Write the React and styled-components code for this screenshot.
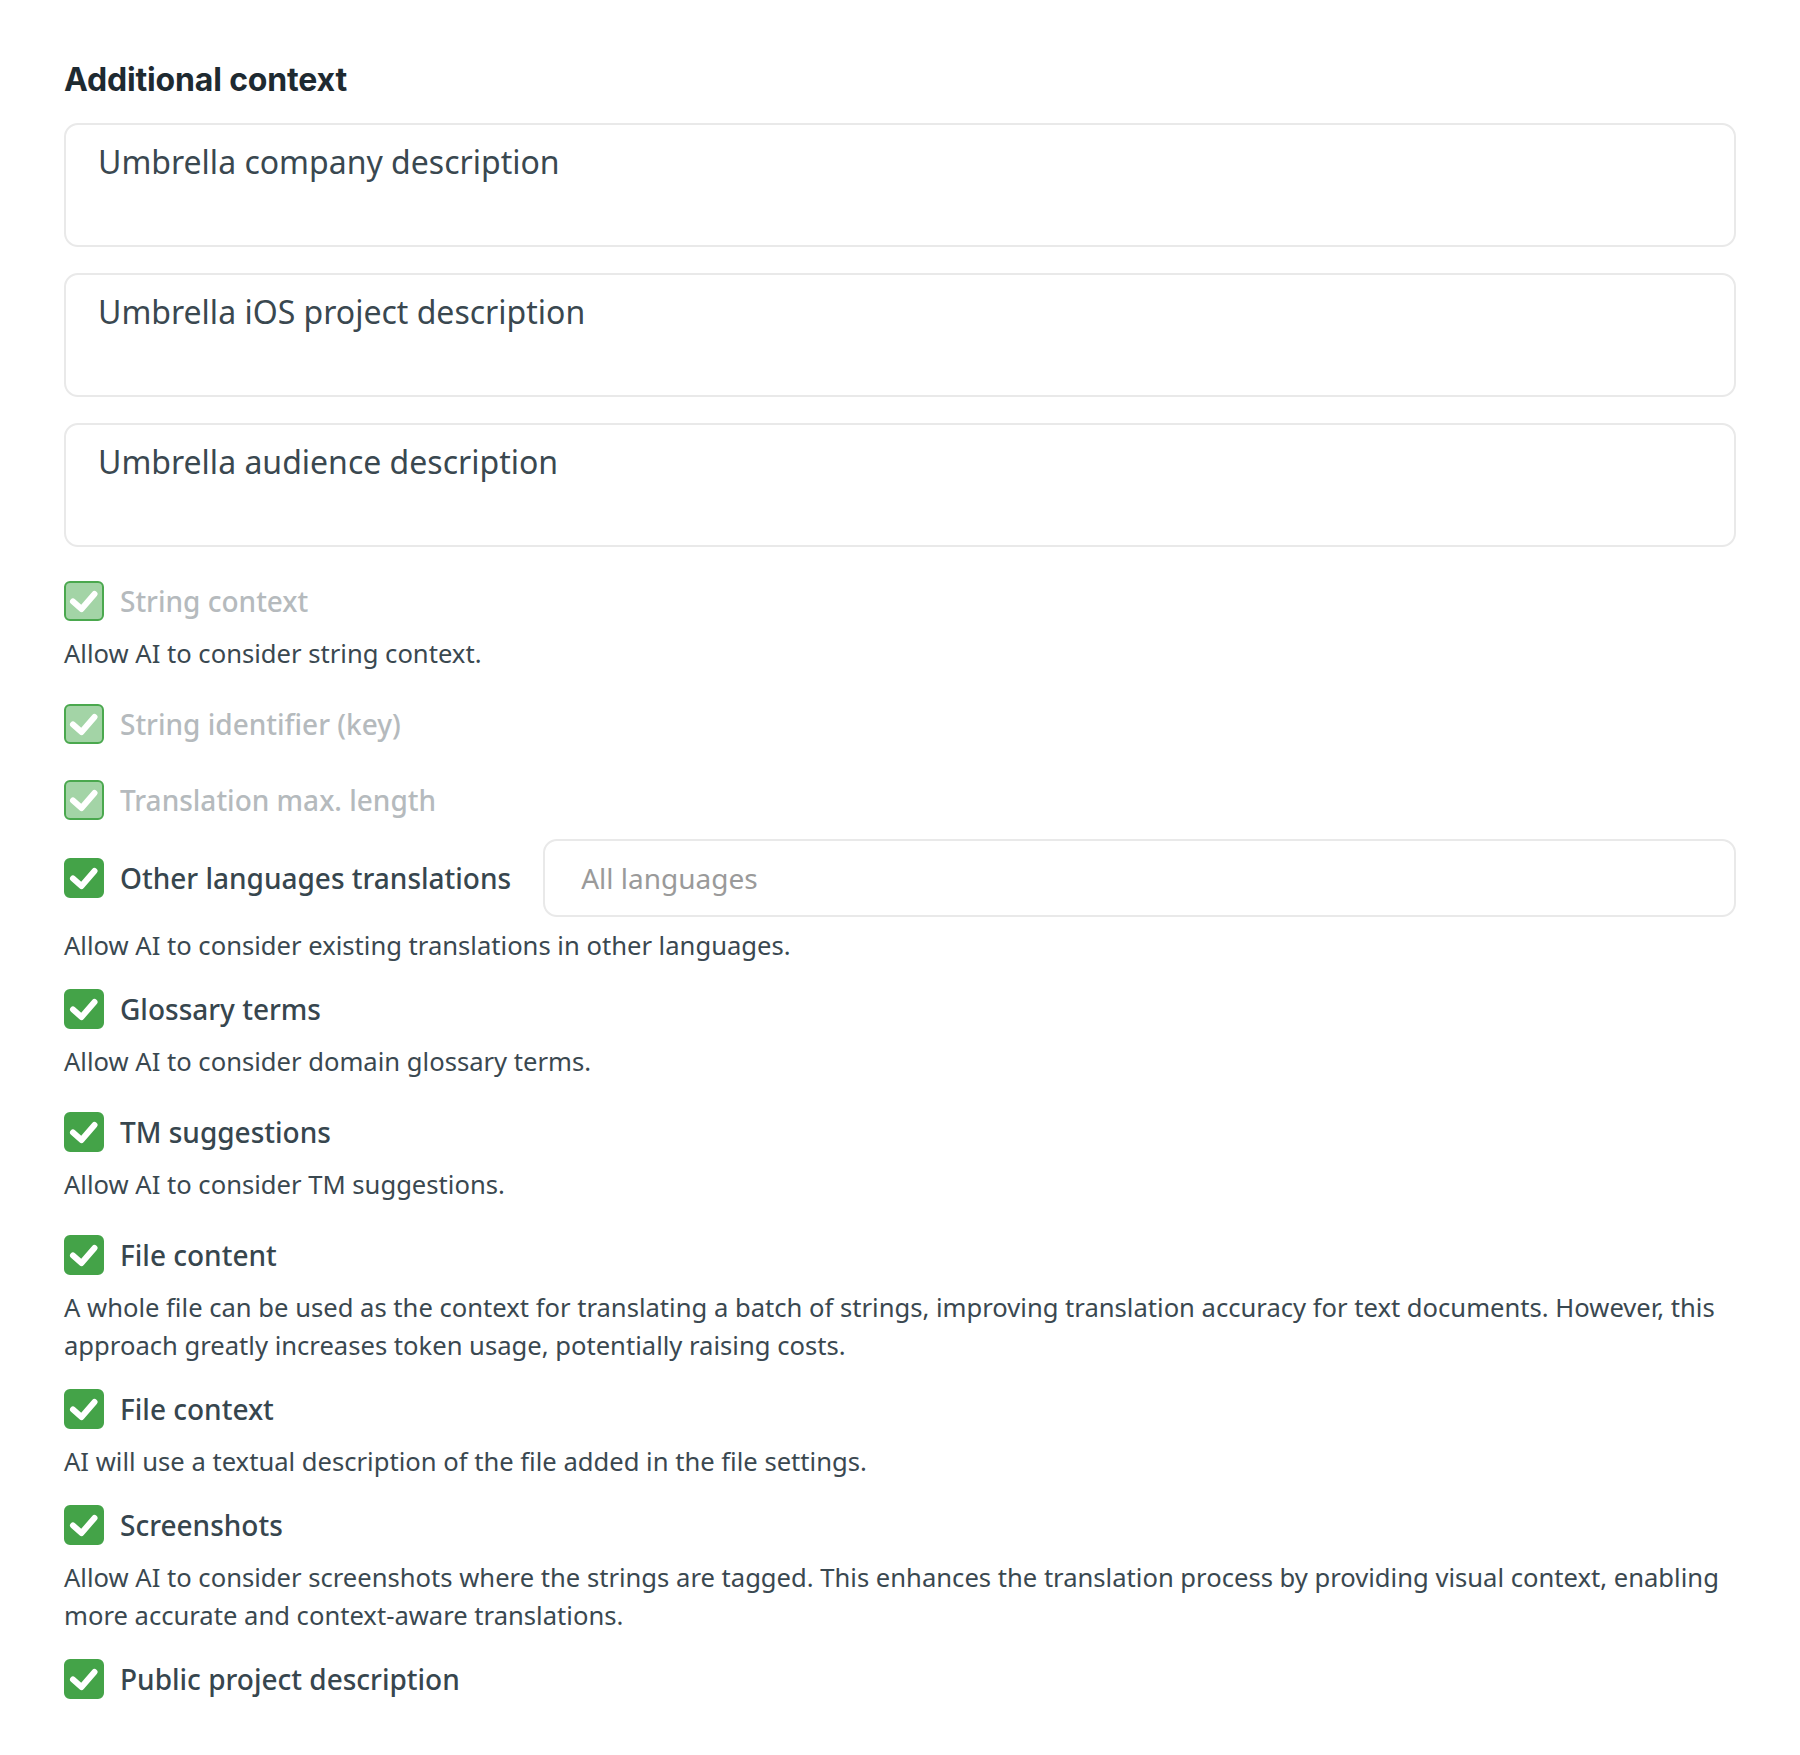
import React from 'react';
import styled, { createGlobalStyle } from 'styled-components';

const GlobalStyle = createGlobalStyle`
  html, body { margin: 0; padding: 0; background: #ffffff; }
  body { font-family: "Noto Sans", "Open Sans", sans-serif; }
  *, *::before, *::after { box-sizing: border-box; }
`;

const Page = styled.main`
  display: flex;
  flex-direction: column;
  padding: 60px 64px 54px;
`;

const Heading = styled.h2`
  margin: 0 0 23px;
  font-family: Inter, "Liberation Sans", sans-serif;
  font-weight: 700;
  font-size: 32px;
  line-height: 40px;
  letter-spacing: -0.005em;
  color: #1e2a31;
`;

const AreaList = styled.div`
  display: flex;
  flex-direction: column;
  gap: 26px;
`;

const ContextArea = styled.textarea`
  display: block;
  width: 100%;
  height: 124px;
  resize: none;
  margin: 0;
  border: 2px solid #e9e9e9;
  border-radius: 14px;
  padding: 13px 32px;
  font-family: "Noto Sans", sans-serif;
  font-size: 32px;
  line-height: 48px;
  color: #3a4850;
  background: #ffffff;
  outline: none;
`;

const Option = styled.section`
  display: flex;
  flex-direction: column;
  margin-top: ${(p) => p.$gap}px;
`;

const Row = styled.label`
  display: flex;
  align-items: center;
  min-height: 48px;
  gap: 16px;
`;

const Box = styled.span`
  flex: none;
  width: 40px;
  height: 40px;
  border-radius: 6px;
  display: flex;
  align-items: center;
  justify-content: center;
  background: ${(p) => (p.$disabled ? '#a3d4a6' : '#44a348')};
  border: 2px solid ${(p) => (p.$disabled ? '#4aa84e' : '#44a348')};
`;

const Label = styled.span`
  font-size: 28px;
  font-weight: 500;
  line-height: 40px;
  color: ${(p) => (p.$disabled ? '#b5babd' : '#37464e')};
`;

const LangInput = styled.input`
  flex: 1;
  min-width: 0;
  height: 78px;
  margin: 0 0 0 16px;
  border: 2px solid #e9e9e9;
  border-radius: 14px;
  padding: 0 36px;
  font-family: "Noto Sans", sans-serif;
  font-size: 28px;
  color: #3a4850;
  background: #ffffff;
  outline: none;
  &::placeholder { color: #9a9a9a; opacity: 1; }
`;

const Description = styled.p`
  margin: 10px 0 0;
  font-size: 25.6px;
  line-height: 38px;
  color: #3a4850;
`;

const Check = () => (
  <svg width="36" height="36" viewBox="0 0 36 36" aria-hidden="true">
    <polyline
      points="7,18.5 15.5,26 28.5,11"
      fill="none"
      stroke="#ffffff"
      strokeWidth="6"
      strokeLinecap="round"
      strokeLinejoin="round"
    />
  </svg>
);

const options = [
  { label: 'String context', disabled: true, gap: 30, desc: 'Allow AI to consider string context.' },
  { label: 'String identifier (key)', disabled: true, gap: 27 },
  { label: 'Translation max. length', disabled: true, gap: 28 },
  { label: 'Other languages translations', gap: 15, input: true, desc: 'Allow AI to consider existing translations in other languages.' },
  { label: 'Glossary terms', gap: 20, desc: 'Allow AI to consider domain glossary terms.' },
  { label: 'TM suggestions', gap: 27, desc: 'Allow AI to consider TM suggestions.' },
  {
    label: 'File content',
    gap: 27,
    desc: 'A whole file can be used as the context for translating a batch of strings, improving translation accuracy for text documents. However, this approach greatly increases token usage, potentially raising costs.',
  },
  { label: 'File context', gap: 20, desc: 'AI will use a textual description of the file added in the file settings.' },
  {
    label: 'Screenshots',
    gap: 20,
    desc: 'Allow AI to consider screenshots where the strings are tagged. This enhances the translation process by providing visual context, enabling more accurate and context-aware translations.',
  },
  { label: 'Public project description', gap: 20 },
];

export default function App() {
  return (
    <>
      <GlobalStyle />
      <Page>
        <Heading>Additional context</Heading>
        <AreaList>
          <ContextArea readOnly defaultValue="Umbrella company description" />
          <ContextArea readOnly defaultValue="Umbrella iOS project description" />
          <ContextArea readOnly defaultValue="Umbrella audience description" />
        </AreaList>
        {options.map((o) => (
          <Option key={o.label} $gap={o.gap}>
            <Row>
              <Box $disabled={o.disabled}>
                <Check />
              </Box>
              <Label $disabled={o.disabled}>{o.label}</Label>
              {o.input && <LangInput placeholder="All languages" readOnly />}
            </Row>
            {o.desc && <Description>{o.desc}</Description>}
          </Option>
        ))}
      </Page>
    </>
  );
}
